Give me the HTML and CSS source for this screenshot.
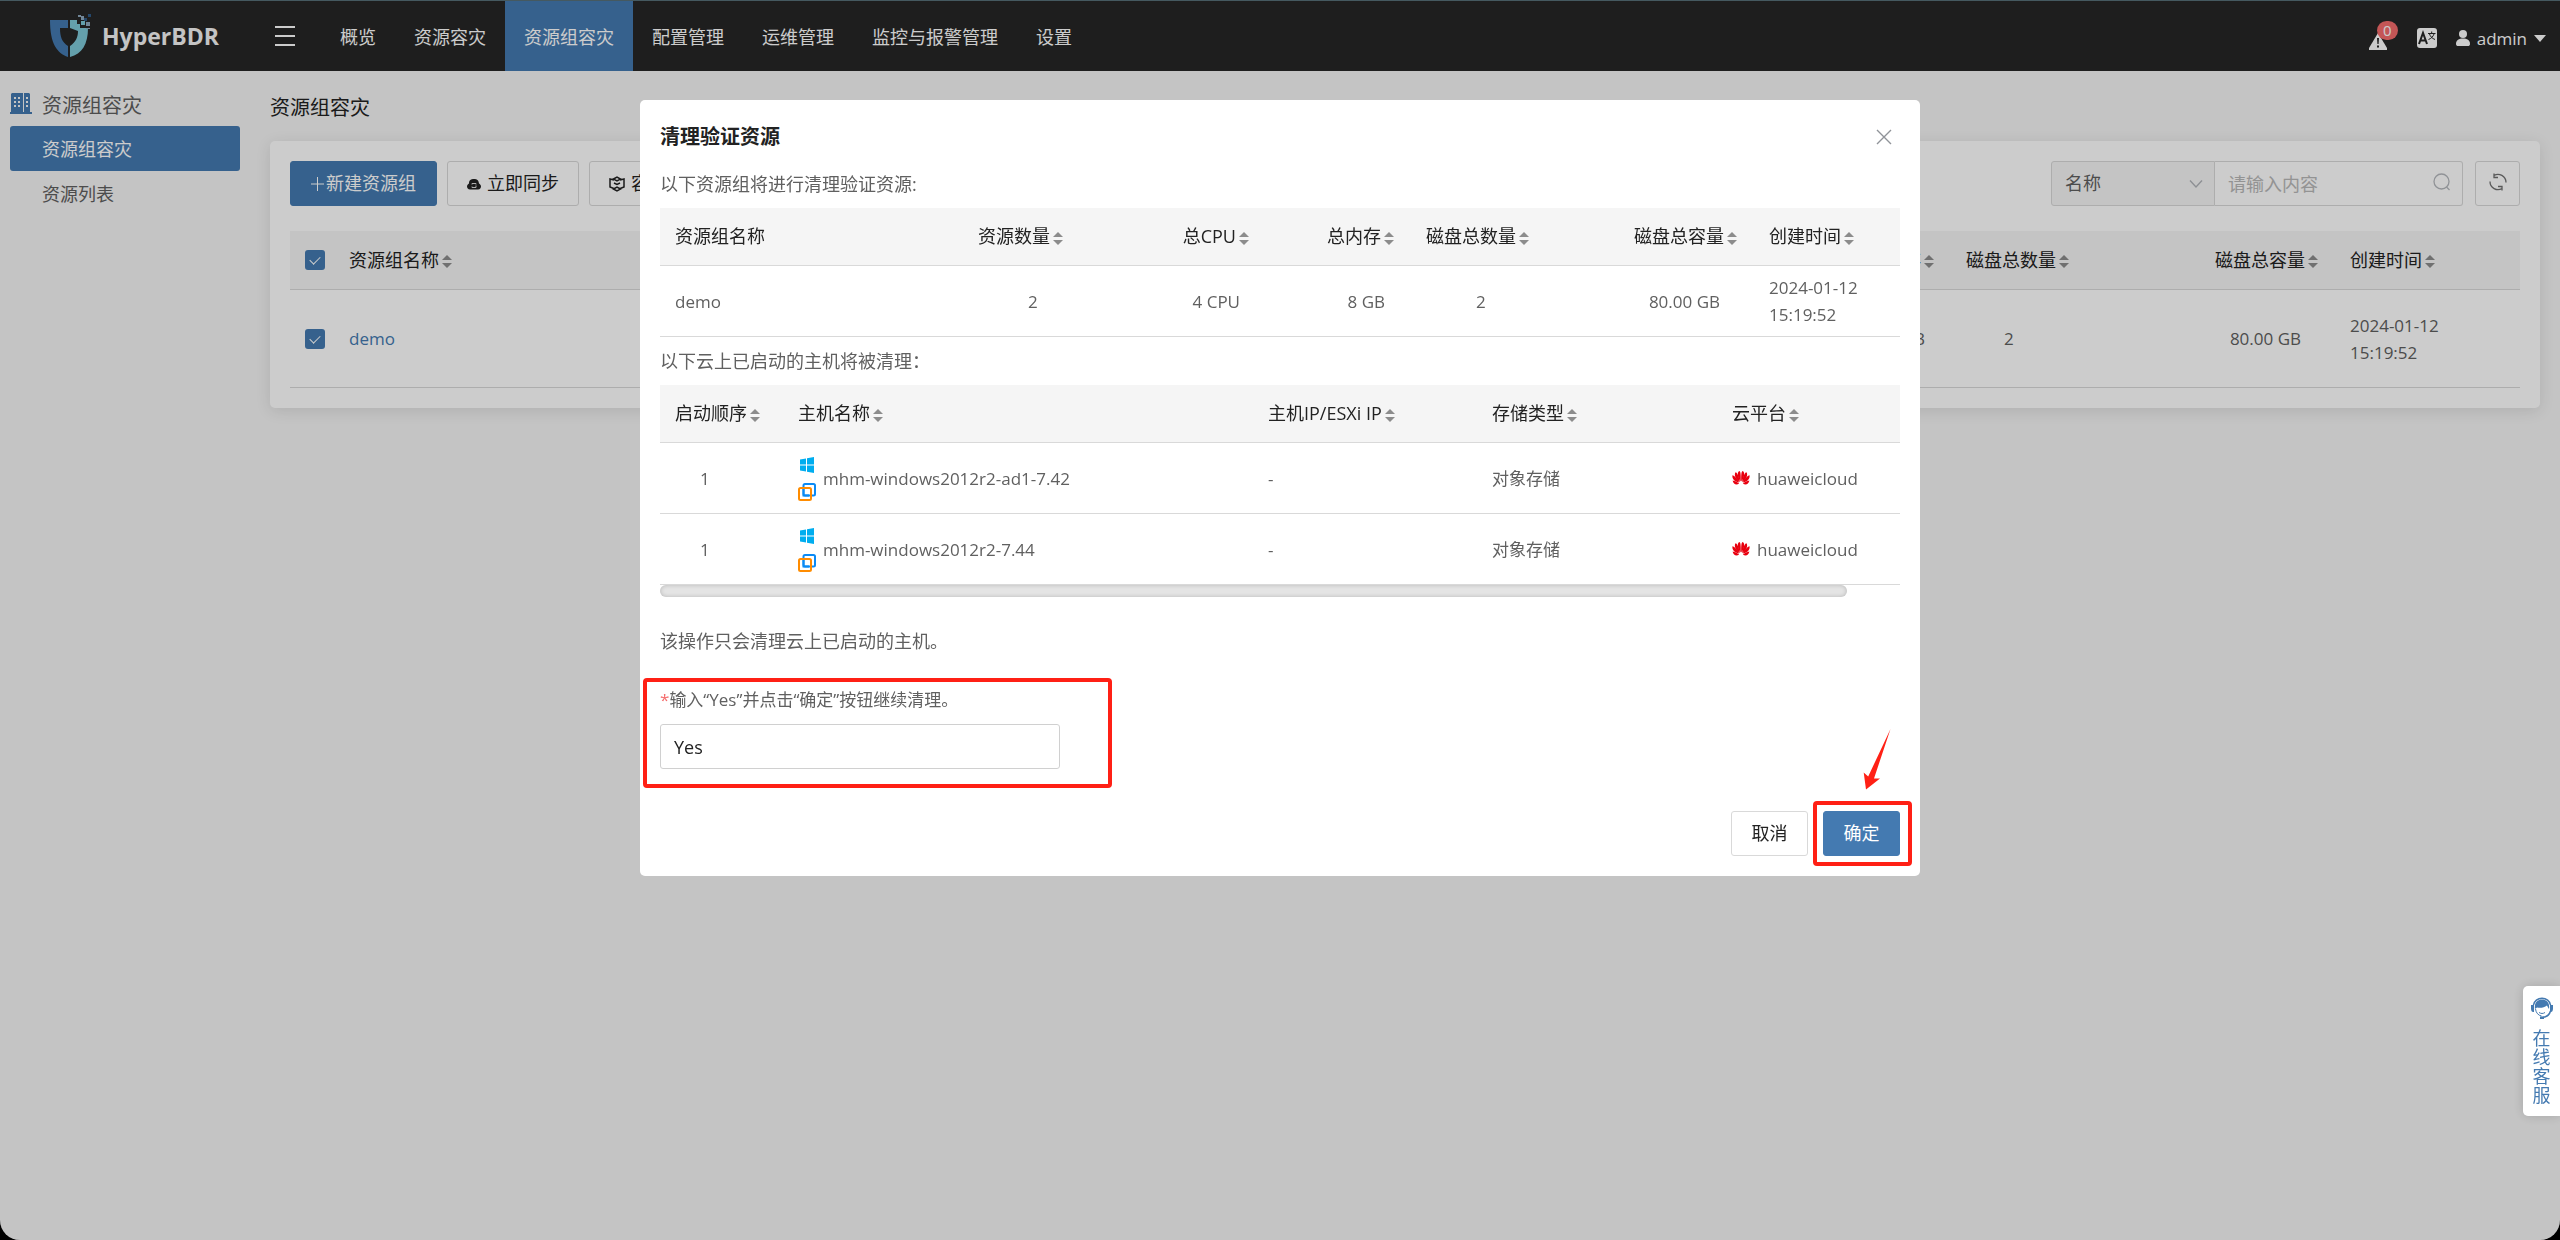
FILE: index.html
```html
<!DOCTYPE html>
<html lang="zh-CN">
<head>
<meta charset="utf-8">
<meta name="viewport" content="width=device-width, initial-scale=1">
<title>HyperBDR - 资源组容灾</title>
<link rel="stylesheet" href="styles.css">
</head>
<body>
<div class="page">
  <header class="topbar">
    <a class="brand" href="#">
      <svg class="brand-mark" width="42" height="44" viewBox="0 0 42 44" aria-hidden="true">
        <path fill="#447ab1" d="M0 6h18v8h-8c0 9 2 14 8 18v11C7 39 0 30 0 6z"/>
        <path fill="#7ec8d8" d="M20 6h7v4h3v4h8c0 16-6 26-18 29V32c6-4 8-9 8-15l-8-3z"/>
        <path fill="#7ec8d8" d="M31 7h4v4h-4z"/>
        <path fill="#8fa9bf" d="M31 2h3v4h-3zM36 8h4v4h-4zM28 1h3v2h-3zM36 14h4v1h-4z"/>
        <path fill="#2f5a88" d="M38 0h3v3h-3zM34 4h3v3h-3z"/>
      </svg>
      <span class="brand-name">HyperBDR</span>
    </a>
    <button class="menu-toggle" type="button" aria-label="菜单"><span></span><span></span><span></span></button>
    <nav class="topnav">
      <a href="#">概览</a>
      <a href="#">资源容灾</a>
      <a href="#" class="is-active">资源组容灾</a>
      <a href="#">配置管理</a>
      <a href="#">运维管理</a>
      <a href="#">监控与报警管理</a>
      <a href="#">设置</a>
    </nav>
    <div class="topbar-tools">
      <button class="alert" type="button" aria-label="报警">
        <svg width="18" height="17" viewBox="0 0 18 17" aria-hidden="true"><path fill="#fff" d="M9 0l9 15v2H0v-2z"/><path fill="#262626" d="M8 5h2l-.4 6H8.400zM8 12.500h2v2H8z"/></svg>
        <span class="badge">0</span>
      </button>
      <button class="lang" type="button" aria-label="语言">
        <svg width="20" height="20" viewBox="0 0 20 20" aria-hidden="true"><rect width="20" height="20" rx="3" fill="#fff"/><path fill="none" stroke="#262626" stroke-width="2" d="M2 16l4-11 4 11M3.500 12.500h5"/><path fill="none" stroke="#262626" d="M11 5.500h7.500M14.700 3.500v2M12.500 6c.8 2.500 2.800 4.500 5.500 5.500M17 6c-.8 2.500-2.800 4.500-5.500 5.500"/></svg>
      </button>
      <button class="user" type="button">
        <svg width="14" height="16" viewBox="0 0 14 16" aria-hidden="true"><circle cx="7" cy="4" r="4" fill="#fff"/><path fill="#fff" d="M0 14c0-4 3-5.500 7-5.500s7 1.500 7 5.500c0 1.500-1 2-2 2H2c-1 0-2-.5-2-2z"/></svg>
        <span>admin</span>
        <svg class="user-caret" width="12" height="7" viewBox="0 0 12 7" aria-hidden="true"><path fill="#fff" d="M0 0h12L6 7z"/></svg>
      </button>
    </div>
  </header>

  <div class="body">
    <aside class="sidebar">
      <div class="sidebar-title">
        <svg width="22" height="22" viewBox="0 0 22 22" aria-hidden="true"><path fill="#447ab1" d="M2 1h11v19H14V1h5l1 1v18h2v2H0v-2h1V2z"/><path fill="#f5f5f5" d="M4 5h2v2H4zM8 5h2v2H8zM4 9h2v2H4zM8 9h2v2H8zM4 13h2v2H4zM8 13h2v2H8zM16 5h2v2h-2zM16 9h2v2h-2zM16 13h2v2h-2z"/></svg>
        <span>资源组容灾</span>
      </div>
      <a href="#" class="is-active">资源组容灾</a>
      <a href="#">资源列表</a>
    </aside>

    <main class="content">
      <h1 class="page-title">资源组容灾</h1>
      <section class="card">
        <div class="toolbar">
          <button class="btn btn-primary btn-new" type="button">
            <svg width="13" height="14" viewBox="0 0 13 14" aria-hidden="true"><path stroke="#fff" fill="none" d="M6.500 0v14M0 7h13"/></svg>新建资源组
          </button>
          <button class="btn" type="button">
            <svg width="14" height="14" viewBox="0 0 14 14" aria-hidden="true"><path fill="#222" d="M3 12.500C1 12.500 0 11 0 9.500 0 8 1 7 2 6.500 2 3 4 2 7 2s4.500 1 5 4.500c1 .5 2 1.500 2 3s-1 3-3 3z"/><path fill="none" stroke="#ddd" d="M5 7.500V6.500h4v1M9 8.500v2H5v-1"/></svg>立即同步
          </button>
          <button class="btn" type="button">
            <svg width="16" height="16" viewBox="0 0 16 16" aria-hidden="true"><path fill="none" stroke="#222" stroke-width="1.500" d="M5 4L1 3v8l5 2M11 4l4-1v8l-5 2M4.500 3L8 1l3.500 2L8 5zM4.500 13L8 15l3.500-2L8 11zM5 7l3 1.500L11 7"/></svg>容
          </button>
          <form class="search" onsubmit="return false">
            <span class="search-field">
              <select aria-label="搜索字段"><option>名称</option></select>
              <svg width="14" height="8" viewBox="0 0 14 8" aria-hidden="true"><path fill="none" stroke="#b0b3b8" stroke-width="1.300" d="M1 .5l6 6.500 6-6.500"/></svg>
            </span>
            <span class="search-text">
              <input type="text" placeholder="请输入内容" aria-label="搜索内容">
              <svg width="18" height="18" viewBox="0 0 18 18" aria-hidden="true"><circle cx="8.500" cy="8.500" r="7.500" fill="none" stroke="#b5b8bd" stroke-width="1.300"/><path stroke="#b5b8bd" stroke-width="1.300" d="M13.500 14l3 3"/></svg>
            </span>
            <button class="btn btn-refresh" type="button" aria-label="刷新">
              <svg width="18" height="18" viewBox="0 0 18 18" aria-hidden="true"><path fill="none" stroke="#707070" stroke-width="1.300" d="M5 2.500C10-.5 17 3 17 9.500M5 .5v4h4M13 15.500C8 18.500 1 15 1 8.500M13 17.500v-4H9"/></svg>
            </button>
          </form>
        </div>

        <table class="grid grid-main">
          <colgroup><col class="w-check"><col><col class="w-mem"><col class="w-disks"><col class="w-size"><col class="w-time"></colgroup>
          <thead>
            <tr>
              <th><input type="checkbox" checked aria-label="全选"></th>
              <th>资源组名称<span class="sort"></span></th>
              <th class="right">总内存<span class="sort"></span></th>
              <th>磁盘总数量<span class="sort"></span></th>
              <th class="right">磁盘总容量<span class="sort"></span></th>
              <th>创建时间<span class="sort"></span></th>
            </tr>
          </thead>
          <tbody>
            <tr>
              <td><input type="checkbox" checked aria-label="选择 demo"></td>
              <td><a href="#">demo</a></td>
              <td class="right">8 GB</td>
              <td class="count">2</td>
              <td class="right size">80.00 GB</td>
              <td>2024-01-12 15:19:52</td>
            </tr>
          </tbody>
        </table>
      </section>
    </main>
  </div>
</div>

<div class="backdrop">
  <div class="modal" role="dialog" aria-modal="true" aria-labelledby="modal-title">
    <div class="modal-head">
      <h2 id="modal-title">清理验证资源</h2>
      <button class="close" type="button" aria-label="关闭">
        <svg width="16" height="16" viewBox="0 0 16 16" aria-hidden="true"><path stroke="#909399" stroke-width="1.400" d="M1 1l14 14M15 1L1 15"/></svg>
      </button>
    </div>

    <p class="note">以下资源组将进行清理验证资源:</p>
    <table class="grid grid-groups">
      <colgroup><col><col class="w-count"><col class="w-cpu"><col class="w-mem"><col class="w-disks"><col class="w-size"><col class="w-time"></colgroup>
      <thead>
        <tr>
          <th>资源组名称</th>
          <th>资源数量<span class="sort"></span></th>
          <th class="right">总CPU<span class="sort"></span></th>
          <th class="right">总内存<span class="sort"></span></th>
          <th>磁盘总数量<span class="sort"></span></th>
          <th class="right">磁盘总容量<span class="sort"></span></th>
          <th>创建时间<span class="sort"></span></th>
        </tr>
      </thead>
      <tbody>
        <tr>
          <td>demo</td>
          <td class="count">2</td>
          <td class="right">4 CPU</td>
          <td class="right">8 GB</td>
          <td class="count">2</td>
          <td class="right size">80.00 GB</td>
          <td>2024-01-12 15:19:52</td>
        </tr>
      </tbody>
    </table>

    <p class="note">以下云上已启动的主机将被清理：</p>
    <table class="grid grid-hosts">
      <colgroup><col class="w-order"><col><col class="w-ip"><col class="w-store"><col class="w-cloud"></colgroup>
      <thead>
        <tr>
          <th>启动顺序<span class="sort"></span></th>
          <th>主机名称<span class="sort"></span></th>
          <th>主机IP/ESXi IP<span class="sort"></span></th>
          <th>存储类型<span class="sort"></span></th>
          <th>云平台<span class="sort"></span></th>
        </tr>
      </thead>
      <tbody>
        <tr>
          <td class="order">1</td>
          <td><span class="host"><span class="host-icons"><svg width="18" height="16" viewBox="0 0 18 16"><use href="#i-windows"/></svg><svg width="18" height="18" viewBox="0 0 18 18"><use href="#i-vmware"/></svg></span>mhm-windows2012r2-ad1-7.42</span></td>
          <td>-</td>
          <td>对象存储</td>
          <td><span class="cloud"><svg width="18" height="14" viewBox="0 0 18 14"><use href="#i-huawei"/></svg>huaweicloud</span></td>
        </tr>
        <tr>
          <td class="order">1</td>
          <td><span class="host"><span class="host-icons"><svg width="18" height="16" viewBox="0 0 18 16"><use href="#i-windows"/></svg><svg width="18" height="18" viewBox="0 0 18 18"><use href="#i-vmware"/></svg></span>mhm-windows2012r2-7.44</span></td>
          <td>-</td>
          <td>对象存储</td>
          <td><span class="cloud"><svg width="18" height="14" viewBox="0 0 18 14"><use href="#i-huawei"/></svg>huaweicloud</span></td>
        </tr>
      </tbody>
    </table>
    <div class="hscroll"></div>

    <p class="hint">该操作只会清理云上已启动的主机。</p>
    <div class="confirm-field">
      <label for="confirm"><span class="required">*</span>输入“Yes”并点击“确定”按钮继续清理。</label>
      <input id="confirm" type="text" value="Yes">
      <span class="mark mark-field"></span>
    </div>

    <div class="modal-foot">
      <button class="btn" type="button">取消</button>
      <div class="confirm-action">
        <button class="btn btn-primary" type="button">确定</button>
        <span class="mark mark-action"></span>
        <svg class="mark-arrow" width="30" height="62" viewBox="0 0 30 62" aria-hidden="true"><path fill="#ff2015" d="M29.500 0L13 49.500l6 0L5 60.500 2.700 43.500l4.500 4z"/></svg>
      </div>
    </div>
  </div>
</div>

<button class="support" type="button">
  <svg width="22" height="24" viewBox="0 0 22 24" aria-hidden="true">
    <path fill="#447ab1" d="M0 9h3v7H2c-1 0-2-1-2-3.500zM22 9h-3v7h1c1 0 2-1 2-3.500z"/>
    <path fill="none" stroke="#447ab1" stroke-width="1.500" d="M2.500 9a8.600 8 0 0 1 17 0M19.500 15c-1 4-4 6-8 6.500"/>
    <path fill="#447ab1" d="M4 13C3 6 7 3.500 11 3.500S19 6 18 13c-1-1.500-1.500-2.500-2-3.500-3 2.500-7 2.500-10 2zM9 20.500h4v2.500H9z"/>
    <path fill="none" stroke="#447ab1" d="M4.500 13c.5 4 3 6.500 6 7M8 16.500c2 1.300 4 1.300 6 0"/>
  </svg>
  <span>在线客服</span>
</button>

<svg class="sprite" width="0" height="0" aria-hidden="true">
  <symbol id="i-windows" viewBox="0 0 18 16"><path fill="#00adef" d="M2 2.500l6-1v6H2zM9 1.300L16 0v7.500H9zM2 8.500h6v6l-6-1zM9 8.500h7V16l-7-1.300z"/></symbol>
  <symbol id="i-vmware" viewBox="0 0 18 18"><rect x="5.500" y="1" width="11.500" height="11.500" rx="1.500" fill="none" stroke="#0a8af5" stroke-width="2"/><rect x="1" y="5" width="12" height="12" rx="1.500" fill="none" stroke="#ff8c00" stroke-width="2"/><path stroke="#0a8af5" stroke-width="2" d="M5.500 6v6.500h5.500"  fill="none"/></symbol>
  <symbol id="i-huawei" viewBox="0 0 18 14"><g fill="#e8000f"><path d="M8.700 10.500C5.500 6.500 4.800 1.500 7.200 0 8.600 0 9 4 8.700 10.500zM9.300 10.500C12.500 6.500 13.200 1.500 10.800 0 9.400 0 9 4 9.300 10.500z"/><path d="M7.900 11C4 9 1.500 4 3.600 1.300 5.300 1.800 7.200 6 7.900 11zM10.100 11C14 9 16.500 4 14.400 1.300 12.700 1.800 10.800 6 10.100 11z"/><path d="M7.200 11.600C3 11.300-.3 7.800.5 4.300 2.300 4.800 5.800 8 7.200 11.600zM10.800 11.600C15 11.300 18.300 7.800 17.500 4.300 15.700 4.800 12.200 8 10.800 11.600z"/><path d="M7.100 12.400C4.500 14.500 1.500 13.300.6 9.500 3 9.800 5.200 11 7.100 12.400zM10.900 12.400c2.600 2.100 5.600.9 6.500-2.900-2.400.3-4.600 1.500-6.500 2.900z"/></g></symbol>
</svg>
</body>
</html>
```

FILE: styles.css
```css
:root {
  --blue: #447ab1;
  --line: #d9d9d9;
  --ink: #222;
  --text: #606060;
  --red: #ff2015;
}

* { box-sizing: border-box; }

body {
  margin: 0;
  background: #000;
  color: var(--text);
  font-family: "Open Sans", "Noto Sans CJK SC", sans-serif;
  font-size: 18px;
  line-height: 27px;
}

button, input, select { font: inherit; color: inherit; margin: 0; }
button { padding: 0; border: 0; background: none; cursor: pointer; }
a { color: var(--blue); text-decoration: none; }
p, h1, h2 { margin: 0; }
svg { display: block; flex: none; }

.page {
  min-height: 100vh;
  background: #f5f5f5;
  border-radius: 0 0 20px 20px;
}

/* Top bar */
.topbar {
  display: flex;
  height: 71px;
  border-top: 1px solid #577078;
  background: #262626;
  color: #fff;
}
.brand {
  display: flex;
  align-items: center;
  gap: 10px;
  width: 275px;
  padding-left: 50px;
  color: #f5f5f5;
}
.brand-name { font-size: 23px; font-weight: 700; }
.menu-toggle {
  display: flex;
  flex-direction: column;
  justify-content: center;
  gap: 7px;
  width: 20px;
}
.menu-toggle span { height: 2px; background: #fff; }
.topnav { display: flex; margin-left: 26px; }
.topnav a {
  display: flex;
  align-items: center;
  padding: 2px 19px 0;
  color: #fff;
}
.topnav .is-active { background: var(--blue); }
.topbar-tools {
  display: flex;
  align-items: center;
  margin-left: auto;
  padding: 4px 14px 0 0;
}
.alert { position: relative; padding-top: 6px; }
.badge {
  position: absolute;
  left: 8px;
  top: -6px;
  width: 21px;
  height: 19px;
  border-radius: 10px;
  background: #f56c6c;
  font-size: 15px;
  line-height: 19px;
  text-align: center;
}
.lang { margin: 0 19px 0 30px; }
.user { display: flex; align-items: center; gap: 7px; font-size: 17px; }

/* Side menu and content */
.body { display: flex; }
.sidebar { width: 250px; padding: 20px 10px; }
.sidebar-title {
  display: flex;
  gap: 10px;
  height: 35px;
  font-size: 20px;
  line-height: 29px;
}
.sidebar-title svg { margin-top: 1px; }
.sidebar a {
  display: block;
  height: 45px;
  padding-left: 32px;
  border-radius: 3px;
  color: var(--text);
  line-height: 47px;
}
.sidebar .is-active { background: var(--blue); color: #fff; }
.content { flex: 1; padding: 20px; min-width: 0; }
.page-title {
  padding-bottom: 17px;
  color: var(--ink);
  font-size: 20px;
  font-weight: 400;
  line-height: 33px;
}
.card {
  padding: 20px;
  border-radius: 5px;
  background: #fff;
  box-shadow: 0 3px 15px rgba(0, 0, 0, .1);
}

/* Buttons and toolbar */
.btn {
  display: flex;
  align-items: center;
  justify-content: center;
  gap: 6px;
  height: 45px;
  padding: 0 19px;
  border: 1px solid var(--line);
  border-radius: 3px;
  background: #fff;
  color: var(--ink);
}
.btn-primary { border-color: var(--blue); background: var(--blue); color: #fff; }
.btn-new { width: 147px; gap: 2px; }
.toolbar { display: flex; gap: 10px; margin-bottom: 25px; }
.search { display: flex; margin-left: auto; }
.search-field, .search-text { display: grid; align-items: center; }
.search-field > *, .search-text > * { grid-area: 1 / 1; }
.search-field svg, .search-text svg {
  justify-self: end;
  margin-right: 12px;
  pointer-events: none;
}
.search-text svg { margin-bottom: 4px; }
.search select, .search input {
  width: 100%;
  height: 45px;
  padding: 0 13px;
  border: 1px solid var(--line);
  border-radius: 3px 0 0 3px;
  appearance: none;
}
.search-field { width: 164px; }
.search-text { width: 248px; }
.search select { background: #f5f5f5; }
.search input { border-left: 0; border-radius: 0 3px 3px 0; background: #fff; }
.search input::placeholder { color: #b8b8b8; }
.btn-refresh { width: 45px; margin-left: 12px; padding: 0 0 4px; }

/* Data tables */
.grid {
  width: 100%;
  border-collapse: separate;
  border-spacing: 0;
  table-layout: fixed;
}
.grid th, .grid td {
  padding: 0 15px;
  border-bottom: 1px solid var(--line);
  text-align: left;
}
.grid th {
  height: 58px;
  background: #f5f5f5;
  color: var(--ink);
  font-weight: 400;
  white-space: nowrap;
}
.grid td { height: 71px; font-size: 17px; }
.grid .right { text-align: right; }
.grid th.right { padding-right: 17px; }
.grid td.right { padding-right: 26px; }
.grid td.size { padding-right: 34px; }
.grid td.count { padding-left: 65px; }
.grid td.order { padding-left: 40px; }
.grid-main th { height: 59px; }
.grid-main td { height: 98px; }
.grid-main td.count { padding-left: 53px; }

.grid-main .w-check { width: 44px; }
.grid-main .w-disks { width: 184px; }
.grid-main .w-size { width: 200px; }
.grid-main .w-time { width: 185px; }
.w-mem { width: 145px; }
.w-count { width: 115px; }
.w-cpu { width: 188px; }
.w-disks { width: 189px; }
.w-size { width: 154px; }
.w-time { width: 146px; }
.w-order { width: 123px; }
.w-ip { width: 224px; }
.w-store { width: 240px; }
.w-cloud { width: 183px; }

.sort {
  display: inline-flex;
  flex-direction: column;
  gap: 3px;
  margin-left: 3px;
  vertical-align: -1px;
}
.sort::before, .sort::after {
  content: "";
  border: 5px solid transparent;
}
.sort::before { border-top: 0; border-bottom-color: #8c8c8c; }
.sort::after { border-bottom: 0; border-top-color: #8c8c8c; }
.grid .sort { vertical-align: middle; }

input[type="checkbox"] {
  display: grid;
  place-items: center;
  width: 20px;
  height: 20px;
  border-radius: 3px;
  background: var(--blue);
  appearance: none;
}
input[type="checkbox"]::after {
  content: "";
  width: 5px;
  height: 9px;
  margin-bottom: 2px;
  border: solid #fff;
  border-width: 0 1px 1px 0;
  rotate: 45deg;
}

.host, .cloud { display: flex; align-items: center; gap: 7px; }
.host-icons { display: grid; gap: 10px; padding-top: 2px; }

/* Dialog */
.backdrop {
  position: fixed;
  inset: 0;
  overflow: auto;
  border-radius: 0 0 20px 20px;
  background: rgba(0, 0, 0, .2);
}
.modal {
  width: 50%;
  margin: 100px auto 50px;
  padding: 20px;
  border-radius: 5px;
  background: #fff;
}
.modal-head {
  display: flex;
  align-items: center;
  justify-content: space-between;
  padding-bottom: 7px;
}
.modal-head h2 { color: var(--ink); font-size: 20px; font-weight: 700; line-height: 33px; }
.close { padding: 7px 8px; }
.note { padding: 11px 0 10px; }
.hscroll {
  width: 1187px;
  max-width: 100%;
  height: 12px;
  border-radius: 6px;
  background: #e4e4e4;
  box-shadow: inset 0 0 4px rgba(0, 0, 0, .2);
}
.hint { padding: 31px 0; }
.confirm-field { position: relative; }
.confirm-field label { display: block; margin-bottom: 11px; font-size: 17px; }
.confirm-field input {
  display: block;
  width: 400px;
  height: 45px;
  padding: 0 13px;
  border: 1px solid #d0d0d0;
  border-radius: 3px;
  color: var(--ink);
}
.required { color: #f56c6c; }
.modal-foot {
  display: flex;
  justify-content: flex-end;
  gap: 15px;
  margin-top: 42px;
}
.modal-foot .btn { width: 77px; }
.confirm-action { position: relative; }

/* Callouts drawn over the dialog */
.mark {
  position: absolute;
  border: 4px solid var(--red);
  border-radius: 4px;
  pointer-events: none;
}
.mark-field { left: -17px; top: -8px; width: 469px; height: 110px; }
.mark-action { inset: -10px -12px -10px -10px; }
.mark-arrow { position: absolute; left: 38px; bottom: 65px; }

/* Online support tab */
.support {
  position: fixed;
  right: 0;
  top: 986px;
  display: flex;
  flex-direction: column;
  align-items: center;
  gap: 9px;
  width: 37px;
  padding: 10px 8px 11px;
  border-radius: 5px 0 0 5px;
  background: #fff;
  box-shadow: 0 0 12px rgba(0, 0, 0, .15);
  color: var(--blue);
  line-height: 19px;
}
.support span { width: 18px; }
.sprite { position: absolute; }
```
